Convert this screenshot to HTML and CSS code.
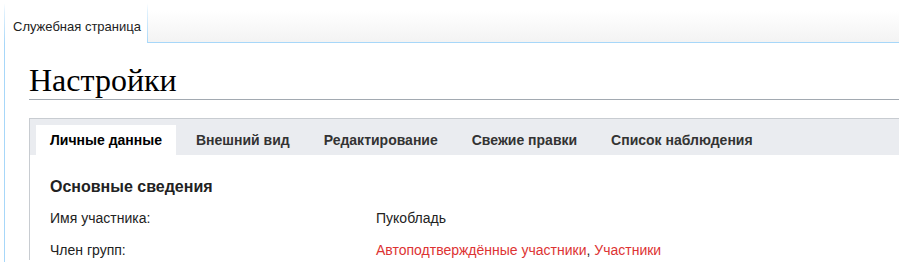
FILE: index.html
```html
<!DOCTYPE html>
<html lang="ru">
<head>
<meta charset="utf-8">
<title>Настройки</title>
<link rel="stylesheet" href="styles.css">
</head>
<body>
<div class="head">
  <div class="ns-tab">Служебная страница</div>
  <div class="head-fill"></div>
</div>
<div class="content">
  <h1 class="title">Настройки</h1>
  <div class="prefs">
    <div class="prefs-tabs">
      <span class="prefs-tab active">Личные данные</span>
      <span class="prefs-tab">Внешний вид</span>
      <span class="prefs-tab">Редактирование</span>
      <span class="prefs-tab">Свежие правки</span>
      <span class="prefs-tab">Список наблюдения</span>
    </div>
    <div class="prefs-body">
      <h2 class="section">Основные сведения</h2>
      <div class="rows">
        <div class="label">Имя участника:</div>
        <div class="value">Пукобладь</div>
        <div class="label">Член групп:</div>
        <div class="value"><a class="red">Автоподтверждённые участники</a>, <a class="red">Участники</a></div>
      </div>
    </div>
  </div>
</div>
</body>
</html>
```
FILE: styles.css
```css
html, body {
  margin: 0;
  padding: 0;
  background: #fff;
  overflow: hidden;
}
body {
  font-family: "Liberation Sans", Arial, sans-serif;
  color: #222;
  width: 899px;
}
.head {
  display: flex;
  height: 43px;
  padding-left: 4px;
}
.ns-tab {
  box-sizing: border-box;
  height: 43px;
  padding: 19px 6px 0 8px;
  font-size: 13px;
  line-height: 15px;
  color: #222;
  background: #fff;
  border-left: 1px solid #a7d7f9;
  border-right: 1px solid #a7d7f9;
  border-image: linear-gradient(to bottom, rgba(167,215,249,0) 0, rgba(167,215,249,0) 4px, rgba(167,215,249,0.35) 12px, #a7d7f9 100%) 1;
  white-space: nowrap;
}
.head-fill {
  flex: 1;
  box-sizing: border-box;
  height: 43px;
  border-bottom: 1px solid #a7d7f9;
  background: linear-gradient(to bottom, #fff 0, #fff 25%, #f3f3f3 100%);
}
.content {
  margin-left: 4px;
  border-left: 1px solid #a7d7f9;
  padding: 19px 0 40px 24px;
}
.title {
  margin: 0;
  font-family: "Liberation Serif", "Times New Roman", serif;
  font-weight: normal;
  font-size: 32px;
  line-height: 37px;
  color: #000;
  border-bottom: 1px solid #a2a9b1;
}
.prefs {
  margin-top: 18px;
  border-top: 1px solid #c8ccd1;
  border-left: 1px solid #c8ccd1;
}
.prefs-tabs {
  display: flex;
  background: #eaecf0;
  padding: 6px 0 0 3px;
  height: 30px;
}
.prefs-tab {
  margin: 0 3px;
  padding: 0 14px;
  font-size: 14px;
  font-weight: bold;
  line-height: 30px;
  color: #333;
  white-space: nowrap;
}
.prefs-tab.active {
  background: #fff;
  color: #000;
}
.prefs-body {
  padding: 22px 0 0 20px;
}
.section {
  margin: 0 0 11px;
  font-size: 16px;
  line-height: 20px;
  font-weight: bold;
  color: #222;
}
.rows {
  display: grid;
  grid-template-columns: 326px 1fr;
  row-gap: 12px;
  font-size: 14px;
  line-height: 20px;
}
.red {
  color: #d33;
  text-decoration: none;
}
```
